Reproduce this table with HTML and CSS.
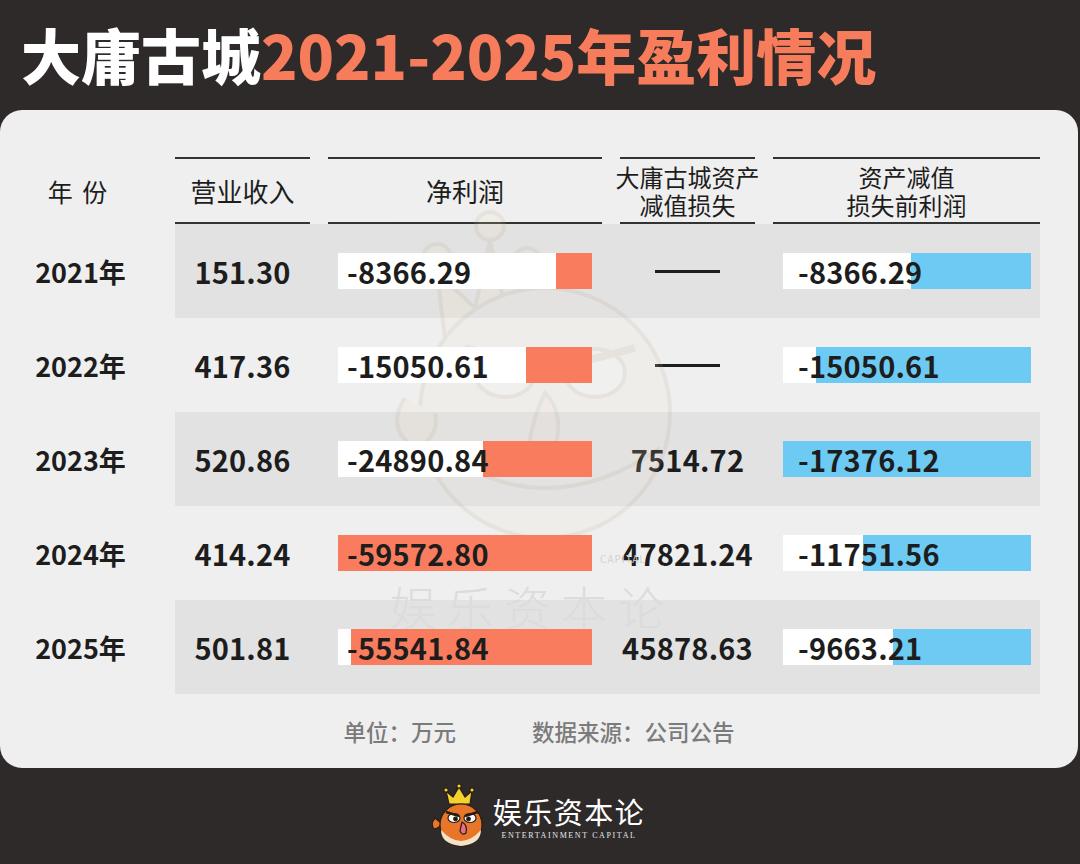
FILE: index.html
```html
<!DOCTYPE html>
<html lang="zh-CN">
<head>
<meta charset="utf-8">
<title>大庸古城2021-2025年盈利情况</title>
<link rel="stylesheet" href="styles.css">
</head>
<body>
<div class="page">
  <h1 class="title"><span class="t-white">大庸古城</span><span class="t-coral">2021-2025年盈利情况</span></h1>

  <section class="card">
    <div class="table">
      <div class="row head">
        <div class="year">年 份</div>
        <div class="cells">
          <div class="cell c-rev hcell">营业收入</div>
          <div class="cell c-net hcell">净利润</div>
          <div class="cell c-imp hcell two">大庸古城资产<br>减值损失</div>
          <div class="cell c-pre hcell two">资产减值<br>损失前利润</div>
        </div>
      </div>

      <div class="row">
        <div class="year">2021年</div>
        <div class="cells stripe">
          <div class="cell c-rev num">151.30</div>
          <div class="cell c-net"><div class="bar coral" style="--w:36px">-8366.29</div></div>
          <div class="cell c-imp"><span class="dash"></span></div>
          <div class="cell c-pre"><div class="bar blue" style="--w:120px">-8366.29</div></div>
        </div>
      </div>

      <div class="row">
        <div class="year">2022年</div>
        <div class="cells">
          <div class="cell c-rev num">417.36</div>
          <div class="cell c-net"><div class="bar coral" style="--w:66px">-15050.61</div></div>
          <div class="cell c-imp"><span class="dash"></span></div>
          <div class="cell c-pre"><div class="bar blue" style="--w:215px">-15050.61</div></div>
        </div>
      </div>

      <div class="row">
        <div class="year">2023年</div>
        <div class="cells stripe">
          <div class="cell c-rev num">520.86</div>
          <div class="cell c-net"><div class="bar coral" style="--w:109px">-24890.84</div></div>
          <div class="cell c-imp num">7514.72</div>
          <div class="cell c-pre"><div class="bar blue" style="--w:248px">-17376.12</div></div>
        </div>
      </div>

      <div class="row">
        <div class="year">2024年</div>
        <div class="cells">
          <div class="cell c-rev num">414.24</div>
          <div class="cell c-net"><div class="bar coral" style="--w:254px">-59572.80</div></div>
          <div class="cell c-imp num">47821.24</div>
          <div class="cell c-pre"><div class="bar blue" style="--w:168px">-11751.56</div></div>
        </div>
      </div>

      <div class="row">
        <div class="year">2025年</div>
        <div class="cells stripe">
          <div class="cell c-rev num">501.81</div>
          <div class="cell c-net"><div class="bar coral" style="--w:241px">-55541.84</div></div>
          <div class="cell c-imp num">45878.63</div>
          <div class="cell c-pre"><div class="bar blue" style="--w:138px">-9663.21</div></div>
        </div>
      </div>
    </div>

    <div class="note">
      <span>单位：万元</span>
      <span>数据来源：公司公告</span>
    </div>

    <div class="watermark" aria-hidden="true">
      <svg class="wm-mascot" viewBox="0 0 300 340" width="300" height="340">
        <g fill="none" stroke="#b9a98a" stroke-width="4">
          <circle cx="42" cy="60" r="14" fill="#efe3b8"/>
          <circle cx="95" cy="28" r="14" fill="#efe3b8"/>
          <circle cx="132" cy="64" r="14" fill="#efe3b8"/>
          <path d="M50 140 L42 74 L80 110 L95 42 L110 110 L132 78 L125 140 Z" fill="#efe3b8"/>
          <circle cx="150" cy="215" r="125" fill="#f3e6d6"/>
          <path d="M40 250 Q150 330 265 250" />
          <path d="M10 200 Q-10 230 20 250 Q45 240 40 215" fill="#f0dcc4"/>
          <ellipse cx="110" cy="175" rx="30" ry="24" fill="#fbf6ee"/>
          <ellipse cx="200" cy="175" rx="30" ry="24" fill="#fbf6ee"/>
          <path d="M70 150 L140 168" stroke-width="8"/>
          <path d="M240 150 L170 168" stroke-width="8"/>
          <path d="M150 195 Q170 215 160 250 Q140 265 135 240 Q140 215 150 195 Z" fill="#f0d6cc"/>
        </g>
      </svg>
      <div class="wm-cap">CAPITAL</div>
      <div class="wm-text">娱乐资本论</div>
    </div>
  </section>

  <footer class="brand">
    <svg class="logo" viewBox="0 0 58 66" width="56" height="64">
      <g stroke="#2a1d14" stroke-width="1.2">
        <path d="M18 22 L15 9 L22 15 L28 5 L34 15 L41 9 L39 22 Z" fill="#f4d22e"/>
        <circle cx="15" cy="8" r="2.2" fill="#f4d22e"/>
        <circle cx="28" cy="4" r="2.2" fill="#f4d22e"/>
        <circle cx="41" cy="8" r="2.2" fill="#f4d22e"/>
        <path d="M4 36 Q-1 42 3 47 Q9 46 10 41 Z" fill="#e8762a"/>
        <circle cx="30" cy="43" r="21" fill="#e8762a"/>
        <path d="M10 48 Q30 70 50 48 Q50 62 30 64 Q10 62 10 48 Z" fill="#f6e2c6" stroke="none"/>
        <ellipse cx="23" cy="36" rx="6" ry="4.5" fill="#ffffff"/>
        <ellipse cx="39" cy="36" rx="6" ry="4.5" fill="#ffffff"/>
        <circle cx="24.5" cy="37" r="1.8" fill="#1a1a1a"/>
        <circle cx="37.5" cy="37" r="1.8" fill="#1a1a1a"/>
        <path d="M15 30 L28 34" stroke-width="2.6"/>
        <path d="M47 30 L34 34" stroke-width="2.6"/>
        <path d="M31 40 Q37 43 35 51 Q31 54 29 49 Q30 44 31 40 Z" fill="#e86b8a"/>
      </g>
    </svg>
    <div class="brand-text">
      <div class="brand-cn">娱乐资本论</div>
      <div class="brand-en">ENTERTAINMENT CAPITAL</div>
    </div>
  </footer>
</div>
</body>
</html>
```

FILE: styles.css
```css
* { box-sizing: border-box; }

html, body {
  margin: 0;
  padding: 0;
}

body {
  width: 1080px;
  height: 864px;
  overflow: hidden;
  background: #2e2a29;
  font-family: "Noto Sans CJK SC", "Noto Sans", sans-serif;
  color: #1d1d1d;
}

.page {
  width: 1080px;
  height: 864px;
  display: flex;
  flex-direction: column;
}

.title {
  margin: 0;
  height: 110px;
  padding-left: 21px;
  font-size: 60px;
  font-weight: 900;
  line-height: 108px;
  letter-spacing: 0;
  white-space: nowrap;
}

.t-white { color: #ffffff; }
.t-coral { color: #f77c5c; }

.card {
  position: relative;
  z-index: 0;
  height: 658px;
  margin-right: 2px;
  background: #efefef;
  border-radius: 22px;
  padding-top: 47px;
  overflow: hidden;
}

.table {
  display: flex;
  flex-direction: column;
}

.row {
  display: flex;
  height: 94px;
}

.row.head {
  height: 67px;
}

.year {
  width: 175px;
  padding-right: 14px;
  display: flex;
  align-items: center;
  justify-content: center;
  font-size: 27px;
  font-weight: 700;
  white-space: nowrap;
}

.head .year {
  font-weight: 400;
  font-size: 25px;
  padding-right: 20px;
  word-spacing: 4px;
}

.cells {
  display: flex;
  gap: 18px;
  width: 865px;
}

.cells.stripe {
  background: #e2e2e2;
}

.cell {
  display: flex;
  align-items: center;
  justify-content: center;
}

.c-rev { width: 135px; }
.c-net { width: 274px; padding: 0 10px; justify-content: flex-start; }
.c-imp { width: 135px; }
.c-pre { width: 267px; padding: 0 9px 0 10px; justify-content: flex-start; }

.hcell {
  border-top: 2px solid #333333;
  border-bottom: 2px solid #333333;
  justify-content: center;
  font-size: 26px;
  font-weight: 400;
  line-height: 30px;
  text-align: center;
  padding: 0;
  white-space: nowrap;
}

.hcell.two {
  font-size: 24px;
  line-height: 28px;
}

.num {
  font-size: 29px;
  font-weight: 700;
  letter-spacing: 0.2px;
}

.dash {
  display: block;
  width: 65px;
  height: 3px;
  background: #1d1d1d;
}

.bar {
  width: 100%;
  height: 36px;
  display: flex;
  align-items: center;
  font-size: 29px;
  font-weight: 700;
  letter-spacing: 0.2px;
  line-height: 36px;
  position: relative;
  z-index: 2;
}

.bar.coral {
  padding-left: 9px;
  background: linear-gradient(to left, #fa7c5e var(--w), #ffffff var(--w));
}

.bar.blue {
  padding-left: 15px;
  background: linear-gradient(to left, #6dcbf3 var(--w), #ffffff var(--w));
}

.note {
  margin-top: 22px;
  display: flex;
  justify-content: center;
  gap: 76px;
  padding-left: 0;
  font-size: 22.5px;
  font-weight: 500;
  color: #7b7b7b;
  line-height: 30px;
}

.watermark {
  position: absolute;
  left: 0;
  top: 0;
  width: 100%;
  height: 100%;
  pointer-events: none;
  z-index: 1;
}

.wm-mascot {
  position: absolute;
  left: 395px;
  top: 88px;
  opacity: 0.16;
}

.wm-cap {
  position: absolute;
  left: 600px;
  top: 444px;
  font-size: 10px;
  line-height: 10px;
  letter-spacing: 1px;
  color: #d2d2d2;
}

.wm-text {
  position: absolute;
  left: 390px;
  top: 472px;
  font-family: "Noto Sans CJK SC", sans-serif;
  font-size: 46px;
  line-height: 46px;
  font-weight: 300;
  letter-spacing: 11px;
  color: #dcdcdc;
}

.brand {
  flex: 1;
  display: flex;
  align-items: center;
  justify-content: center;
  gap: 4px;
  padding-right: 4px;
  padding-bottom: 2px;
}

.logo {
  display: block;
  width: 58px;
  height: 66px;
}

.brand-text {
  display: flex;
  flex-direction: column;
  align-items: center;
  color: #ffffff;
  padding-top: 6px;
}

.brand-cn {
  font-family: "Noto Sans CJK SC", serif;
  font-size: 29px;
  font-weight: 400;
  letter-spacing: 1.5px;
  line-height: 32px;
}

.brand-en {
  margin-top: 4px;
  font-family: "Liberation Serif", serif;
  font-size: 8px;
  letter-spacing: 1.6px;
  line-height: 10px;
  color: #e8e8e8;
}
```
